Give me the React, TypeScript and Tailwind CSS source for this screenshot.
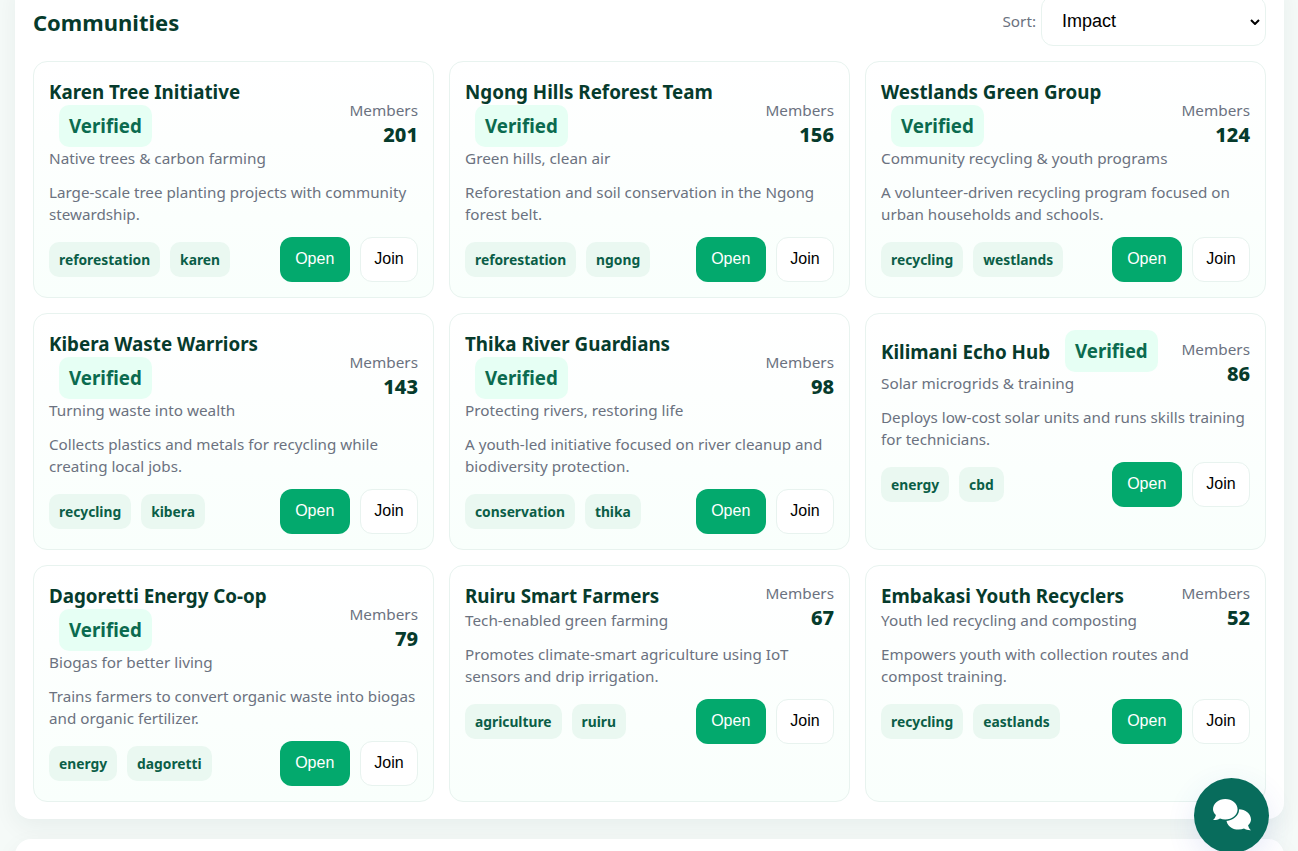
type Community = {
  name: string;
  verified?: boolean;
  tagline: string;
  about: string;
  members: number;
  tags: string[];
};

const communities: Community[] = [
  { name: 'Karen Tree Initiative', verified: true, tagline: 'Native trees & carbon farming', about: 'Large-scale tree planting projects with community stewardship.', members: 201, tags: ['reforestation', 'karen'] },
  { name: 'Ngong Hills Reforest Team', verified: true, tagline: 'Green hills, clean air', about: 'Reforestation and soil conservation in the Ngong forest belt.', members: 156, tags: ['reforestation', 'ngong'] },
  { name: 'Westlands Green Group', verified: true, tagline: 'Community recycling & youth programs', about: 'A volunteer-driven recycling program focused on urban households and schools.', members: 124, tags: ['recycling', 'westlands'] },
  { name: 'Kibera Waste Warriors', verified: true, tagline: 'Turning waste into wealth', about: 'Collects plastics and metals for recycling while creating local jobs.', members: 143, tags: ['recycling', 'kibera'] },
  { name: 'Thika River Guardians', verified: true, tagline: 'Protecting rivers, restoring life', about: 'A youth-led initiative focused on river cleanup and biodiversity protection.', members: 98, tags: ['conservation', 'thika'] },
  { name: 'Kilimani Echo Hub', verified: true, tagline: 'Solar microgrids & training', about: 'Deploys low-cost solar units and runs skills training for technicians.', members: 86, tags: ['energy', 'cbd'] },
  { name: 'Dagoretti Energy Co-op', verified: true, tagline: 'Biogas for better living', about: 'Trains farmers to convert organic waste into biogas and organic fertilizer.', members: 79, tags: ['energy', 'dagoretti'] },
  { name: 'Ruiru Smart Farmers', tagline: 'Tech-enabled green farming', about: 'Promotes climate-smart agriculture using IoT sensors and drip irrigation.', members: 67, tags: ['agriculture', 'ruiru'] },
  { name: 'Embakasi Youth Recyclers', tagline: 'Youth led recycling and composting', about: 'Empowers youth with collection routes and compost training.', members: 52, tags: ['recycling', 'eastlands'] },
];

function CommunityCard({ c }: { c: Community }) {
  return (
    <div className="rounded-[14px] border border-[#e8f3ef] bg-gradient-to-b from-white to-[#f9fffc] px-[15px] pt-4">
      <div className="flex items-center justify-between gap-3">
        <div>
          <h3 className="text-[18.8px] font-bold leading-[26px] text-[#063b2c]">
            <span className="align-[-1px]">{c.name}</span>{' '}
            {c.verified && (
              <span className="ml-[10px] inline-block rounded-[10px] bg-[#e6fff4] px-[10px] py-[6px] text-[18.72px] font-bold leading-[30px] text-[#0b6b4f]">
                Verified
              </span>
            )}
          </h3>
          <p className="mb-px text-[15.3px] leading-[22px] text-[#6b7280]">{c.tagline}</p>
        </div>
        <div className="shrink-0 text-right">
          <div className="text-[15.3px] leading-[22px] text-[#6b7280]">Members</div>
          <div className="text-[20px] font-extrabold leading-[28px] text-[#063b2c]">{c.members}</div>
        </div>
      </div>
      <p className="mt-[11px] text-[15.2px] leading-[22px] text-[#6b7280]">{c.about}</p>
      <div className="mt-3 flex items-center justify-between">
        <div className="flex gap-[10px]">
          {c.tags.map((t) => (
            <span key={t} className="rounded-[10px] bg-[#eaf8f1] px-[10px] py-[7px] text-[13.8px] font-bold leading-[21px] text-[#0b5e47]">
              {t}
            </span>
          ))}
        </div>
        <div className="flex gap-[10px] font-['Liberation_Sans',sans-serif] text-[16px]">
          <button className="h-[45px] w-[70.5px] rounded-[12px] bg-[#03a96d] pb-[2px] text-white">Open</button>
          <button className="h-[45px] w-[58px] rounded-[12px] border border-[#e8f3ef] bg-white pb-[2px] text-black">Join</button>
        </div>
      </div>
    </div>
  );
}

function ChatIcon() {
  return (
    <svg width="38" height="31.5" viewBox="0 0 38 31.5" className="mb-[2px] overflow-visible" fill="#fff">
      <path d="M25.7 10.2C18.9 10.2 13.4 14.8 13.4 20.4C13.4 26 18.9 30.6 25.7 30.6C27.6 30.6 29.4 30.2 31 29.6C33 30.8 35.5 31.4 38 31.2C36.4 29.8 35.4 28 35.1 26.2C36.9 24.6 38 22.6 38 20.4C38 14.8 32.5 10.2 25.7 10.2Z" />
      <path
        d="M12.3 0C19.1 0 24.6 4.6 24.6 10.2C24.6 15.8 19.1 20.4 12.3 20.4C10.4 20.4 8.6 20 7 19.4C5 20.6 2.5 21.2 0 21C1.6 19.6 2.6 17.8 2.9 16C1.1 14.4 0 12.4 0 10.2C0 4.6 5.5 0 12.3 0Z"
        stroke="#086c5c"
        strokeWidth="3"
        paintOrder="stroke"
      />
    </svg>
  );
}

export default function App() {
  return (
    <div className="h-[851px] overflow-hidden bg-[#f5faf8] font-['Noto_Sans',sans-serif]">
      <div className="-mt-[22px] px-[15px] pr-[14px]">
        <section className="rounded-[16px] bg-white p-[18px] pb-[17px] shadow-[0_8px_24px_rgba(6,59,44,0.06)]">
          <div className="mb-[15px] flex items-center justify-between">
            <h2 className="mt-[2px] text-[22px] font-bold text-[#063b2c]">Communities</h2>
            <div className="flex items-center gap-[5px]">
              <span className="text-[15.3px] text-[#6b7280]">Sort:</span>
              <div className="relative">
                <select className="h-[50px] w-[225px] appearance-none rounded-[12px] border border-[#e8f3ef] bg-white px-5 font-['Liberation_Sans',sans-serif] text-[18px] text-black">
                  <option>Impact</option>
                </select>
                <svg width="10" height="6" viewBox="0 0 10 6" fill="none" stroke="#000" strokeWidth="2" className="pointer-events-none absolute right-[6px] top-[23px]">
                  <path d="M1 1L5 5L9 1" />
                </svg>
              </div>
            </div>
          </div>
          <div className="grid auto-rows-[237px] grid-cols-3 gap-[15px]">
            {communities.map((c) => (
              <CommunityCard key={c.name} c={c} />
            ))}
          </div>
        </section>
        <section className="mt-5 h-[200px] rounded-[16px] bg-white shadow-[0_8px_24px_rgba(6,59,44,0.06)]" />
      </div>
      <button className="fixed bottom-[-2px] right-[29px] flex h-[75px] w-[75px] items-center justify-center rounded-full bg-[#086c5c] shadow-[0_10px_30px_rgba(60,80,200,0.12)]">
        <ChatIcon />
      </button>
    </div>
  );
}
